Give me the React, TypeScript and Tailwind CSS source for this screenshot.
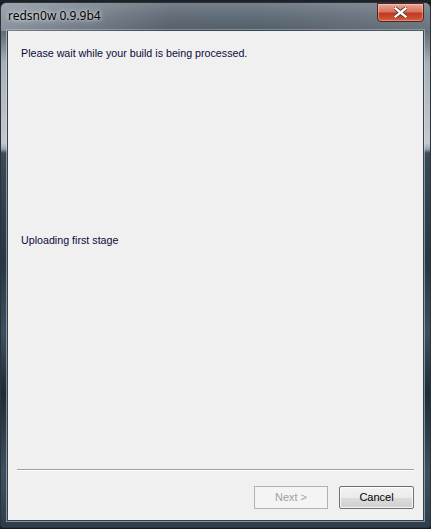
import React from "react";

export default function App() {
  return (
    <div className="w-[431px] h-[529px] bg-[#151a1f] flex flex-col overflow-hidden">
      <div className="h-[2px] bg-[#1c2228]" />
      <div
        className="relative flex-1 flex flex-col px-[6px] pb-[6px] mb-[1px] rounded-t-[6px] rounded-b-[3px] border border-[#2a323a]"
        style={{
          background:
            "linear-gradient(180deg,#8d979f 0px,#6f7a84 14px,#5d6873 27px,#a9b1b8 60px,#c4c9ce 140px,#9ba5ad 146px,#3a4a57 150px,#263644 260px,#3d4f5f 330px,#1d2b36 390px,#3e5060 470px,#2e3e4c 520px)",
        }}
      >
        <div
          className="absolute left-0 right-0 top-0 h-[28px] rounded-t-[6px] pointer-events-none"
          style={{
            background:
              "linear-gradient(90deg,rgba(170,178,186,0.6) 0%,rgba(70,82,94,0.35) 40%,rgba(60,74,88,0.3) 60%,rgba(120,130,140,0.45) 100%)",
          }}
        />
        <div className="relative h-[27px] flex items-start justify-between">
          <span
            className="mt-[4px] ml-[1px] text-[12px] text-black"
            style={{
              fontFamily: '"Noto Sans", "Open Sans", sans-serif',
              textShadow: "0 0 6px rgba(255,255,255,0.8), 0 0 3px rgba(255,255,255,0.7)",
            }}
          >
            redsn0w 0.9.9b4
          </span>
          <div className="w-[47px] h-[19px] rounded-b-[4px] border border-[#5a2218] flex items-center justify-center bg-[linear-gradient(180deg,#e8a597_0%,#d8745f_45%,#c2391e_55%,#d4593d_100%)] shadow-[inset_0_0_1px_1px_rgba(255,255,255,0.35)]">
            <svg width="13" height="11" viewBox="0 0 13 11">
              <path
                d="M1.5 1.5 L11.5 9.5 M11.5 1.5 L1.5 9.5"
                stroke="#4a2a24"
                strokeWidth="4"
                strokeLinecap="square"
              />
              <path
                d="M1.5 1.5 L11.5 9.5 M11.5 1.5 L1.5 9.5"
                stroke="#ffffff"
                strokeWidth="2.4"
                strokeLinecap="square"
              />
            </svg>
          </div>
        </div>
        <div
          className="flex-1 flex flex-col bg-[#f0f0f0] border border-[#36414b] shadow-[0_0_0_1px_rgba(220,228,235,0.5)]"
          style={{ fontFamily: '"Liberation Sans", Tahoma, sans-serif' }}
        >
          <div className="pl-[13px] pt-[16px] text-[10.7px] leading-[13px] text-[#0a0a3c]">
            Please wait while your build is being processed.
          </div>
          <div className="pl-[13px] mt-[174px] text-[10.7px] leading-[13px] text-[#0a0a3c]">
            Uploading first stage
          </div>
          <div className="flex-1" />
          <div className="mx-[9px] h-[2px] border-t border-[#a0a0a0] border-b border-b-white" />
          <div className="flex justify-end gap-[11px] pr-[9px] pt-[15px] pb-[11px]">
            <div className="w-[74px] h-[23px] border border-[#adb2b5] bg-[#f4f4f4] flex items-center justify-center text-[11px] text-[#a0a0a0]">
              Next &gt;
            </div>
            <div className="w-[75px] h-[23px] border border-[#707070] rounded-[2px] bg-[linear-gradient(180deg,#f2f2f2_0%,#ebebeb_50%,#dddddd_51%,#cfcfcf_100%)] shadow-[inset_0_0_0_1px_rgba(255,255,255,0.8)] flex items-center justify-center text-[11px] text-black">
              Cancel
            </div>
          </div>
        </div>
      </div>
    </div>
  );
}
